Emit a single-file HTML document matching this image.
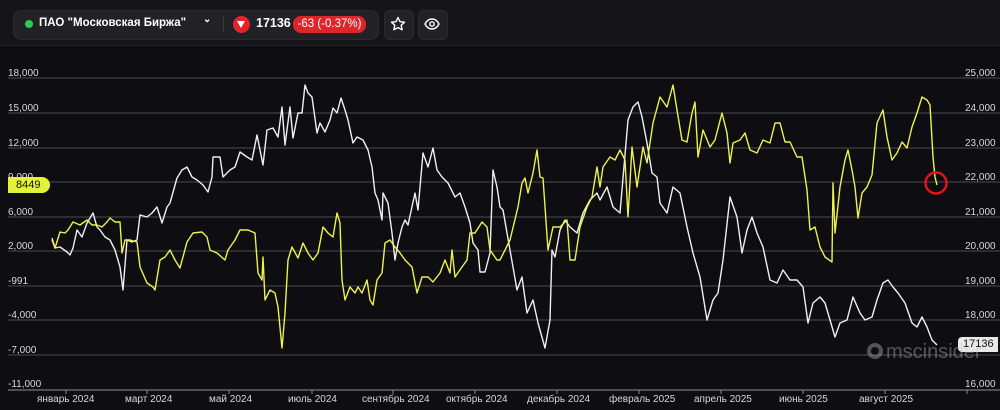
<!DOCTYPE html>
<html><head><meta charset="utf-8"><style>
body{margin:0;width:1000px;height:410px;background:#0e0d12;overflow:hidden;font-family:"Liberation Sans",sans-serif;position:relative}
.top{position:absolute;left:0;top:0;width:1000px;height:45px;background:#151518;border-bottom:1px solid #222}
.panel{position:absolute;left:13px;top:10px;width:364px;height:28px;background:#222226;border-radius:8px;border:1px solid #2c2c30}
.btn{position:absolute;top:10px;width:28px;height:28px;background:#222226;border-radius:6px;border:1px solid #2c2c30}
.t{position:absolute;color:#fff;font-size:11.5px;font-weight:bold;white-space:nowrap}
.lab{position:absolute;color:#d8d8d8;font-size:10px;white-space:nowrap}
</style></head><body>
<div class="top"></div>
<div class="panel"></div>
<div style="position:absolute;left:25px;top:20px;width:8px;height:8px;border-radius:50%;background:#2ecc55"></div>
<div class="t" style="left:39px;top:17px">ПАО "Московская Биржа"</div>
<div class="t" style="left:203px;top:14px;font-size:10px">⌄</div>
<div style="position:absolute;left:223px;top:16px;width:1px;height:16px;background:#3a3a3e"></div>
<div style="position:absolute;left:233px;top:16px;width:17px;height:17px;border-radius:50%;background:#e0242a"></div>
<div style="position:absolute;left:237px;top:21px;width:0;height:0;border-left:4.5px solid transparent;border-right:4.5px solid transparent;border-top:7px solid #fff"></div>
<div class="t" style="left:256px;top:16px;font-size:12.5px">17136</div>
<div style="position:absolute;left:293px;top:16px;width:73px;height:17px;border-radius:8px;background:#e0242a;color:#fff;font-size:11.5px;text-align:center;line-height:17px">-63 (-0.37%)</div>
<div class="btn" style="left:384px"></div>
<svg style="position:absolute;left:390px;top:16px" width="16" height="16" viewBox="0 0 16 16"><path d="M8 1.5l2 4.2 4.5.5-3.3 3.1.9 4.5L8 11.6l-4.1 2.2.9-4.5L1.5 6.2 6 5.7z" fill="none" stroke="#fff" stroke-width="1.4" stroke-linejoin="round"/></svg>
<div class="btn" style="left:418px"></div>
<svg style="position:absolute;left:424px;top:17px" width="16" height="14" viewBox="0 0 16 14"><path d="M1 7C3 3 5.5 2 8 2s5 1 7 5c-2 4-4.5 5-7 5S3 11 1 7z" fill="none" stroke="#fff" stroke-width="1.4"/><circle cx="8" cy="7" r="2.2" fill="none" stroke="#fff" stroke-width="1.4"/></svg>

<svg style="position:absolute;left:0;top:0" width="1000" height="410">
<g stroke="#4a4a50" stroke-width="1">
<line x1="8" y1="78" x2="1000" y2="78"/><line x1="8" y1="113" x2="1000" y2="113"/><line x1="8" y1="148" x2="1000" y2="148"/><line x1="8" y1="182" x2="1000" y2="182"/><line x1="8" y1="217" x2="1000" y2="217"/><line x1="8" y1="251" x2="1000" y2="251"/><line x1="8" y1="286" x2="1000" y2="286"/><line x1="8" y1="320" x2="1000" y2="320"/><line x1="8" y1="355" x2="1000" y2="355"/>
</g>
<line x1="8" y1="390" x2="1000" y2="390" stroke="#666" stroke-width="1.5"/>
<g stroke="#888" stroke-width="1"><line x1="66" y1="390" x2="66" y2="394"/><line x1="147" y1="390" x2="147" y2="394"/><line x1="229" y1="390" x2="229" y2="394"/><line x1="312" y1="390" x2="312" y2="394"/><line x1="393" y1="390" x2="393" y2="394"/><line x1="475" y1="390" x2="475" y2="394"/><line x1="557" y1="390" x2="557" y2="394"/><line x1="639" y1="390" x2="639" y2="394"/><line x1="721" y1="390" x2="721" y2="394"/><line x1="803" y1="390" x2="803" y2="394"/><line x1="885" y1="390" x2="885" y2="394"/><line x1="967" y1="390" x2="967" y2="394"/></g>
<polyline fill="none" stroke="#f0f0f0" stroke-width="1.4" stroke-linejoin="round" points="52,238 55,248 60,247 67,252 70,255 73,248 77,230 82,237 87,223 90,218 93,213 97,227 100,230 105,237 110,240 115,250 120,267 123,290 127,240 132,242 137,240 140,215 147,217 152,213 157,207 162,223 167,207 170,203 177,178 182,170 187,167 192,177 197,180 203,185 208,192 212,177 213,157 220,157 223,177 230,170 235,167 240,152 247,157 252,160 257,135 260,150 263,165 267,130 273,128 278,137 282,107 285,145 290,107 293,138 298,113 302,113 305,85 308,93 312,97 317,133 320,123 325,132 330,120 333,108 337,113 341,98 345,110 348,120 353,143 357,137 363,140 368,150 372,167 375,193 378,200 382,220 383,193 388,203 392,233 395,260 398,243 402,227 405,220 408,225 415,193 418,210 423,153 428,167 433,148 437,170 442,177 448,183 455,197 460,193 465,207 470,223 473,243 478,250 480,272 485,272 490,253 493,170 497,187 500,207 503,210 510,250 517,290 522,277 527,313 533,300 538,323 545,348 550,320 552,250 555,257 560,230 565,220 570,227 577,233 583,213 590,200 597,193 600,200 607,187 613,207 620,213 628,120 633,107 638,102 642,117 647,143 652,173 657,177 660,203 667,213 673,187 680,193 687,227 693,253 700,277 707,320 713,300 718,293 723,260 730,197 737,217 742,253 747,230 752,217 757,233 763,247 770,280 777,283 783,270 790,280 797,280 803,287 808,323 813,303 820,297 825,303 830,320 835,337 840,323 847,320 853,297 860,313 865,320 872,317 877,300 883,283 888,280 893,287 898,293 905,303 912,323 917,327 922,317 927,327 932,340 937,345"/>
<polyline fill="none" stroke="#eef24a" stroke-width="1.4" stroke-linejoin="round" points="52,240 55,248 60,232 65,233 68,230 73,222 80,225 87,220 92,225 97,225 102,227 107,222 110,218 115,222 120,222 122,253 125,240 130,240 137,242 140,267 147,283 153,287 155,290 160,260 165,257 170,250 175,260 180,268 187,242 193,233 202,232 207,237 210,250 217,253 225,260 228,250 235,240 240,230 248,230 255,233 258,273 262,280 263,257 265,300 270,290 275,293 278,307 282,348 285,313 288,260 292,247 298,258 303,243 308,253 313,260 318,253 323,227 328,233 333,237 337,213 340,223 342,280 345,300 350,287 355,293 358,287 362,293 367,280 370,300 373,305 377,280 382,273 385,243 390,240 395,247 400,253 405,260 412,267 417,293 422,277 428,277 433,282 440,273 445,260 450,273 452,250 455,277 462,267 467,260 470,233 475,233 482,222 487,227 490,250 497,260 500,260 510,240 518,207 522,183 525,178 528,193 533,173 537,150 540,177 543,178 548,250 553,227 560,227 567,220 570,260 575,260 580,227 587,207 592,197 597,167 600,187 603,167 610,157 615,160 620,150 625,160 628,217 632,147 637,187 643,147 647,163 653,123 660,97 667,107 673,85 677,110 682,140 687,142 692,113 695,102 698,157 703,130 710,147 715,140 722,113 727,133 730,163 733,143 740,140 745,133 750,150 757,153 763,140 770,143 775,123 780,123 785,142 790,142 797,157 802,157 807,190 810,230 815,227 820,247 825,257 832,262 833,183 835,233 840,187 845,160 848,150 852,170 855,187 858,218 862,193 867,187 872,175 877,123 883,110 887,137 892,160 897,153 902,142 907,148 912,127 917,113 922,97 927,100 930,105 933,157 935,177 937,185"/>
<circle cx="936" cy="183" r="10.5" fill="none" stroke="#e0141a" stroke-width="2.5"/>
</svg>

<div class="lab" style="left:8px;top:68px">18,000</div>
<div class="lab" style="left:8px;top:103px">15,000</div>
<div class="lab" style="left:8px;top:138px">12,000</div>
<div class="lab" style="left:8px;top:172px">9,000</div>
<div class="lab" style="left:8px;top:207px">6,000</div>
<div class="lab" style="left:8px;top:241px">2,000</div>
<div class="lab" style="left:8px;top:276px">-991</div>
<div class="lab" style="left:8px;top:310px">-4,000</div>
<div class="lab" style="left:8px;top:345px">-7,000</div>
<div class="lab" style="left:8px;top:379px">-11,000</div>
<div style="position:absolute;left:8px;top:177px;width:42px;height:16px;background:#e4f23c;border-radius:0 8px 8px 0;color:#111;font-size:11px;line-height:16px;padding-left:8px;box-sizing:border-box">8449</div>

<div class="lab" style="left:965px;top:68px">25,000</div>
<div class="lab" style="left:965px;top:103px">24,000</div>
<div class="lab" style="left:965px;top:138px">23,000</div>
<div class="lab" style="left:965px;top:172px">22,000</div>
<div class="lab" style="left:965px;top:207px">21,000</div>
<div class="lab" style="left:965px;top:241px">20,000</div>
<div class="lab" style="left:965px;top:276px">19,000</div>
<div class="lab" style="left:965px;top:310px">18,000</div>
<div class="lab" style="left:965px;top:379px">16,000</div>
<div style="position:absolute;left:958px;top:337px;width:40px;height:15px;background:#e8e8e8;border-radius:4px 0 0 4px;color:#111;font-size:11px;line-height:15px;padding-left:5px;box-sizing:border-box">17136</div>

<div style="position:absolute;left:867px;top:341px;color:rgba(200,200,200,0.38);font-size:20px;white-space:nowrap"><span style="display:inline-block;width:16px;height:16px;border:4px solid rgba(200,200,200,0.38);border-radius:50%;box-sizing:border-box;vertical-align:-1px;margin-right:3px"></span>mscinsider</div>

<div class="lab" style="left:37px;top:394px">январь 2024</div>
<div class="lab" style="left:125px;top:394px">март 2024</div>
<div class="lab" style="left:209px;top:394px">май 2024</div>
<div class="lab" style="left:288px;top:394px">июль 2024</div>
<div class="lab" style="left:362px;top:394px">сентябрь 2024</div>
<div class="lab" style="left:446px;top:394px">октябрь 2024</div>
<div class="lab" style="left:527px;top:394px">декабрь 2024</div>
<div class="lab" style="left:609px;top:394px">февраль 2025</div>
<div class="lab" style="left:694px;top:394px">апрель 2025</div>
<div class="lab" style="left:779px;top:394px">июнь 2025</div>
<div class="lab" style="left:859px;top:394px">август 2025</div>
</body></html>
